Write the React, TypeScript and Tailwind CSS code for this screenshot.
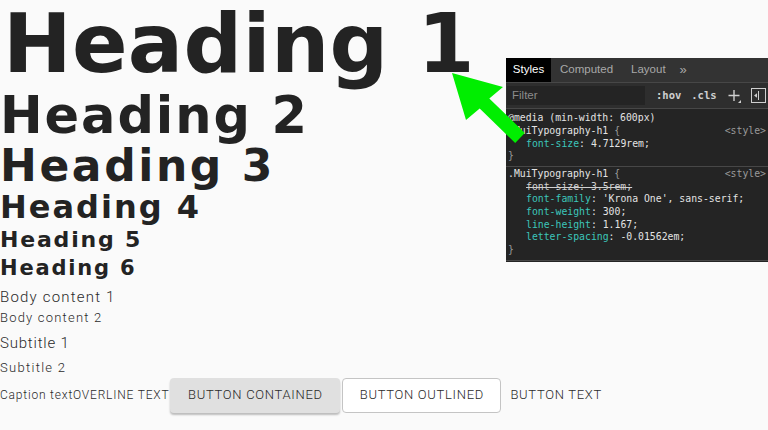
import React from 'react';

const heading = "font-['DejaVu_Sans',sans-serif] font-bold text-[#232323] whitespace-nowrap";
const body = "font-['Roboto',sans-serif] font-light text-[#2a2a2a] whitespace-nowrap";
const mono = "font-['DejaVu_Sans_Mono',monospace]";

const Prop: React.FC<{ name: string; value: string; struck?: boolean }> = ({ name, value, struck }) => {
  if (struck) {
    return <div className="pl-[18px] text-[#d0d0d0] line-through decoration-[#d0d0d0]">{`${name}: ${value};`}</div>;
  }
  return (
    <div className="pl-[18px]">
      <span className="text-[#3cc6bb]">{name}</span>
      <span className="text-[#e3e3e3]">: {value};</span>
    </div>
  );
};

const DevTools: React.FC = () => {
  return (
    <section className="absolute left-[506px] top-[58px] w-[262px] h-[204px] bg-[#242424] flex flex-col">
      <div className="h-[25px] bg-[#333333] border-b border-[#474747] flex items-stretch font-['Liberation_Sans',sans-serif] text-[11.5px]">
        <div className="w-[45px] bg-black text-white flex items-center justify-center">Styles</div>
        <div className="pl-[9px] pr-[18px] text-[#a8a8a8] flex items-center">Computed</div>
        <div className="text-[#a8a8a8] flex items-center">Layout</div>
        <div className="pl-[14px] text-[#a8a8a8] flex items-center text-[13px]">»</div>
      </div>
      <div className="h-[26px] bg-[#2e2e2e] border-b border-[#474747] flex items-center">
        <div className="ml-[1px] w-[138px] h-[19px] bg-[#242424] flex items-center pl-[5px] font-['Liberation_Sans',sans-serif] text-[11.5px] text-[#8c8c8c]">
          Filter
        </div>
        <div className={`${mono} font-bold text-[10.5px] text-[#cfcfcf] ml-[11px]`}>:hov</div>
        <div className={`${mono} font-bold text-[10.5px] text-[#cfcfcf] ml-[10px]`}>.cls</div>
        <div className="relative ml-[11px] w-[14px] h-[14px]">
          <svg viewBox="0 0 14 14" className="w-[14px] h-[14px]">
            <path d="M6 1v11M0.5 6.5h11" stroke="#cfcfcf" strokeWidth="1.4" />
            <path d="M13 11v3h-3z" fill="#cfcfcf" />
          </svg>
        </div>
        <div className="ml-[9px] w-[15px] h-[15px] border border-[#cfcfcf] flex items-center justify-start">
          <div className="ml-[2px] w-[5px] h-[9px] border-r border-[#cfcfcf] flex items-center">
            <svg viewBox="0 0 4 6" className="w-[3px] h-[5px]">
              <path d="M4 0v6L0 3z" fill="#cfcfcf" />
            </svg>
          </div>
        </div>
      </div>
      <div className={`${mono} text-[9.8px] leading-[12.8px] pt-[3px] pb-[3px] pl-[2px] pr-[2px] border-b border-[#474747]`}>
        <div className="text-[#e3e3e3]">@media (min-width: 600px)</div>
        <div className="flex justify-between">
          <span className="text-[#e3e3e3]">
            .MuiTypography-h1 <span className="text-[#9a9a9a]">{'{'}</span>
          </span>
          <span className="text-[#9a9a9a]">{'<style>'}</span>
        </div>
        <Prop name="font-size" value="4.7129rem" />
        <div className="text-[#9a9a9a]">{'}'}</div>
      </div>
      <div className={`${mono} text-[9.8px] leading-[12.6px] pt-[1px] pb-[4px] pl-[2px] pr-[2px] border-b border-[#474747]`}>
        <div className="flex justify-between">
          <span className="text-[#e3e3e3]">
            .MuiTypography-h1 <span className="text-[#9a9a9a]">{'{'}</span>
          </span>
          <span className="text-[#9a9a9a]">{'<style>'}</span>
        </div>
        <Prop name="font-size" value="3.5rem" struck />
        <Prop name="font-family" value="'Krona One', sans-serif" />
        <Prop name="font-weight" value="300" />
        <Prop name="line-height" value="1.167" />
        <Prop name="letter-spacing" value="-0.01562em" />
        <div className="text-[#9a9a9a]">{'}'}</div>
      </div>
    </section>
  );
};

const App: React.FC = () => {
  return (
    <main className="relative w-[768px] h-[430px] overflow-hidden bg-[#fafafa]">
      <div className="flex flex-col items-start">
        <h1 className={`${heading} ml-[3px] text-[82px] leading-[87px] tracking-[0.3px]`}>Heading 1</h1>
        <h2 className={`${heading} text-[51px] leading-[57px] tracking-[1.9px]`}>Heading 2</h2>
        <h3 className={`${heading} text-[44px] leading-[43px] tracking-[2.6px]`}>Heading 3</h3>
        <h4 className={`${heading} text-[32px] leading-[40px] tracking-[2px]`}>Heading 4</h4>
        <h5 className={`${heading} text-[22px] leading-[25px] tracking-[1.8px]`}>Heading 5</h5>
        <h6 className={`${heading} text-[21px] leading-[33px] tracking-[1.8px]`}>Heading 6</h6>
        <p className={`${body} text-[15px] leading-[25px] tracking-[1.2px]`}>Body content 1</p>
        <p className={`${body} text-[13px] leading-[16px] tracking-[1.2px]`}>Body content 2</p>
        <p className={`${body} text-[15px] leading-[34px] tracking-[0.8px]`}>Subtitle 1</p>
        <p className={`${body} text-[13px] leading-[15px] tracking-[1.3px]`}>Subtitle 2</p>
        <div className="pt-[2px] h-[38px] flex items-center">
          <span className={`${body} text-[12px] leading-[20px] tracking-[0.8px]`}>Caption text</span>
          <span className={`${body} text-[12px] leading-[20px] tracking-[0.8px] uppercase`}>Overline text</span>
          <button className={`${body} ml-[1px] w-[170px] h-[35px] rounded-[4px] bg-[#e0e0e0] text-[13px] tracking-[0.7px] uppercase shadow-[0_2px_2px_rgba(0,0,0,0.25)]`}>
            Button contained
          </button>
          <button className={`${body} ml-[2px] w-[159px] h-[35px] rounded-[4px] bg-white border border-[#c4c4c4] text-[13px] tracking-[0.7px] uppercase`}>
            Button outlined
          </button>
          <button className={`${body} ml-[1px] h-[35px] px-[8px] text-[13px] tracking-[0.7px] uppercase`}>
            Button text
          </button>
        </div>
      </div>
      <DevTools />
      <svg className="absolute left-0 top-0 w-[768px] h-[430px] pointer-events-none" viewBox="0 0 768 430">
        <polygon
          points="452,73 503,87 489.3,98.4 524.8,132.9 515.2,143.1 479.7,108.6 466,120"
          fill="#00ee00"
        />
      </svg>
    </main>
  );
};

export default App;
